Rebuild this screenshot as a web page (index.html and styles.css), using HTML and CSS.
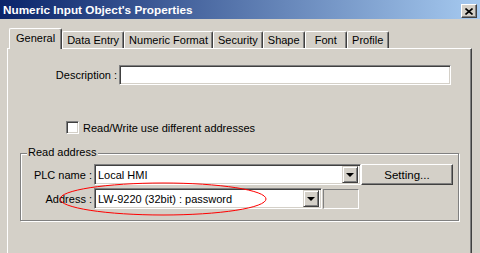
FILE: index.html
```html
<!DOCTYPE html>
<html lang="en">
<head>
    <meta charset="UTF-8">
    <title>Numeric Input Object's Properties</title>
    <link rel="stylesheet" href="styles.css">
</head>
<body>
    <div class="window">
        <div class="titlebar">
            <span class="title">Numeric Input Object's Properties</span>
            <span class="close">
                <svg width="8" height="7" viewBox="0 0 8 7"><path d="M0.5 0.5 L7.5 6.5 M7.5 0.5 L0.5 6.5" stroke="#000" stroke-width="1.6"/></svg>
            </span>
        </div>
        <div class="content">
            <div class="tabs">
                <div class="tab active">General</div>
                <div class="tab">Data Entry</div>
                <div class="tab">Numeric Format</div>
                <div class="tab">Security</div>
                <div class="tab">Shape</div>
                <div class="tab">Font</div>
                <div class="tab">Profile</div>
            </div>
            <div class="page">
                <div class="desc-row">
                    <span class="desc-label">Description :</span>
                    <div class="edit desc"></div>
                </div>
                <div class="check-row">
                    <span class="checkbox"></span>
                    <span>Read/Write use different addresses</span>
                </div>
                <div class="group">
                    <span class="legend">Read address</span>
                    <div class="group-row">
                        <span class="group-label">PLC name :</span>
                        <div class="edit combo plc">
                            <span class="combo-text">Local HMI</span>
                            <span class="drop"><i class="arrow"></i></span>
                        </div>
                        <button class="btn">Setting...</button>
                    </div>
                    <div class="group-row">
                        <span class="group-label">Address :</span>
                        <div class="edit combo addr">
                            <span class="combo-text">LW-9220 (32bit) : password</span>
                            <span class="drop"><i class="arrow"></i></span>
                        </div>
                        <div class="static"></div>
                    </div>
                </div>
            </div>
        </div>
        <svg class="mark" width="208" height="35" viewBox="0 0 208 35">
            <ellipse cx="104" cy="17" rx="103" ry="16" fill="none" stroke="#f00" stroke-width="1"/>
        </svg>
    </div>
</body>
</html>
```

FILE: styles.css
```css
body {
    margin: 0;
    background-color: #d4d0c8;
    font-family: 'Liberation Sans', Arial, sans-serif;
    font-size: 11px;
    color: #000;
    overflow: hidden;
}
.window {
    position: relative;
    width: 480px;
    height: 253px;
    overflow: hidden;
}
.titlebar {
    height: 19px;
    display: flex;
    align-items: center;
    justify-content: space-between;
    padding: 0 3px;
    background: linear-gradient(to right, #0a246a, #a6caf0);
}
.title {
    color: #fff;
    font-weight: bold;
    font-size: 11.75px;
}
.close {
    width: 14px;
    height: 12px;
    display: flex;
    align-items: center;
    justify-content: center;
    background-color: #d4d0c8;
    border: 1px solid;
    border-color: #fff #404040 #404040 #fff;
    box-shadow: inset -1px -1px 0 #808080;
    margin-top: 3px;
}
.content {
    padding: 9px 0 0 7px;
}
.tabs {
    display: flex;
    align-items: flex-end;
    padding-left: 2px;
    height: 20px;
}
.tab {
    height: 16px;
    line-height: 16px;
    min-width: 32px;
    padding: 0 4px;
    text-align: center;
    border: 1px solid;
    border-bottom: none;
    border-color: #fff #404040 #404040 #fff;
    box-shadow: inset -1px 0 0 #808080;
    border-radius: 2px 2px 0 0;
}
.tab.active {
    position: relative;
    height: 20px;
    line-height: 19px;
    padding: 0 6px;
    margin-bottom: -1px;
    background-color: #d4d0c8;
    z-index: 1;
}
.page {
    width: 463px;
    height: 220px;
    border: 1px solid;
    border-bottom: none;
    border-color: #fff #404040 #404040 #fff;
    box-shadow: inset -1px 0 0 #808080;
}
.desc-row {
    display: flex;
    align-items: center;
    margin-top: 16px;
}
.desc-label {
    width: 109px;
    text-align: right;
    margin-right: 2px;
}
.edit {
    box-sizing: border-box;
    background-color: #fff;
    border: 1px solid;
    border-color: #808080 #fff #fff #808080;
    box-shadow: inset 1px 1px 0 #404040, inset -1px -1px 0 #d4d0c8;
}
.desc {
    width: 332px;
    height: 20px;
}
.check-row {
    display: flex;
    align-items: center;
    gap: 4px;
    margin: 36px 0 0 58px;
    height: 13px;
}
.checkbox {
    box-sizing: border-box;
    width: 13px;
    height: 13px;
    background-color: #fff;
    border: 1px solid;
    border-color: #808080 #fff #fff #808080;
    box-shadow: inset 1px 1px 0 #404040, inset -1px -1px 0 #d4d0c8;
}
.group {
    position: relative;
    box-sizing: border-box;
    width: 439px;
    margin: 19px 0 0 12px;
    padding: 10px 0 11px 0;
    border: 1px solid #808080;
    box-shadow: 1px 1px 0 #fff, inset 1px 1px 0 #fff;
    display: flex;
    flex-direction: column;
    gap: 3px;
}
.legend {
    position: absolute;
    left: 6px;
    top: -8px;
    padding: 0 1px;
    background-color: #d4d0c8;
}
.group-row {
    display: flex;
    align-items: center;
}
.group-label {
    width: 71px;
    text-align: right;
    margin-right: 2px;
}
.combo {
    height: 21px;
    display: flex;
    align-items: center;
    justify-content: space-between;
    padding: 2px;
}
.plc {
    width: 267px;
}
.addr {
    width: 228px;
}
.combo-text {
    padding-left: 1px;
}
.drop {
    box-sizing: border-box;
    width: 16px;
    height: 17px;
    display: flex;
    align-items: center;
    justify-content: center;
    background-color: #d4d0c8;
    border: 1px solid;
    border-color: #d4d0c8 #404040 #404040 #d4d0c8;
    box-shadow: inset 1px 1px 0 #fff, inset -1px -1px 0 #808080;
}
.arrow {
    width: 0;
    height: 0;
    border-left: 4px solid transparent;
    border-right: 4px solid transparent;
    border-top: 4px solid #000;
    margin-top: 1px;
}
.btn {
    box-sizing: border-box;
    width: 92px;
    height: 21px;
    padding: 0;
    font-family: inherit;
    font-size: 11.5px;
    color: #000;
    background-color: #d4d0c8;
    border: 1px solid;
    border-color: #fff #404040 #404040 #fff;
    box-shadow: inset -1px -1px 0 #808080;
}
.static {
    box-sizing: border-box;
    width: 36px;
    height: 20px;
    margin-left: 1px;
    border: 1px solid;
    border-color: #808080 #fff #fff #808080;
}
.mark {
    position: absolute;
    left: 59px;
    top: 182px;
}
```
